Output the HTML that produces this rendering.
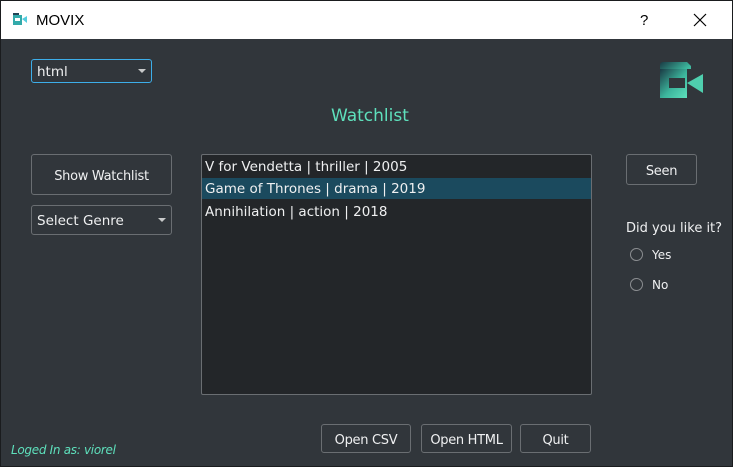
<!DOCTYPE html>
<html><head><meta charset="utf-8"><style>
*{margin:0;padding:0;box-sizing:border-box}
body{width:733px;height:467px;overflow:hidden;background:#31363b;font-family:"DejaVu Sans","Liberation Sans",sans-serif;color:#eff0f1;position:relative;font-size:13px}
.win{position:absolute;left:0;top:0;width:733px;height:467px;border:1px solid #1a1c1e}
.title{position:absolute;left:1px;top:1px;width:731px;height:38px;background:#fff;color:#000;font-family:"Liberation Sans",sans-serif;font-size:15px}
.a{position:absolute}
.btn{position:absolute;border:1px solid #6a6e72;border-radius:3px;display:flex;align-items:center;justify-content:center;font-size:13px;letter-spacing:-0.3px;padding-top:3px}
.combo{position:absolute;border:1px solid #6a6e72;border-radius:3px;font-size:13.5px;padding-left:5px;display:flex;align-items:center;padding-top:2px}
.arrow{position:absolute;right:5px;top:50%;margin-top:-2px;width:0;height:0;border-left:4px solid transparent;border-right:4px solid transparent;border-top:4px solid #c8c9ca}
.radio{position:absolute;width:13px;height:13px;border:1px solid #8a8d90;border-radius:50%}
.li{position:absolute;left:205px;font-size:13.5px}
</style></head><body>
<div class="win"></div>
<div class="title">
 <svg class="a" style="left:12px;top:12px" width="14" height="12" viewBox="0 0 14 12"><rect x="0" y="2" width="9" height="10" fill="#3aa"/><rect x="0" y="0" width="6" height="2" fill="#245"/><rect x="2" y="5" width="5" height="3" fill="#fff"/><polygon points="9,6 14,3 14,10" fill="#5cd"/></svg>
 <div class="a" style="left:35px;top:11px">MOVIX</div>
 <div class="a" style="left:639px;top:11px">?</div>
 <svg class="a" style="left:692px;top:12px" width="14" height="14"><path d="M1 1L13 13M13 1L1 13" stroke="#000" stroke-width="1.2"/></svg>
</div>
<div class="combo" style="left:31px;top:59px;width:121px;height:24px;border-color:#3daee9">html<span class="arrow"></span></div>
<svg class="a" style="left:660px;top:61px" width="44" height="38" viewBox="0 0 44 38">
 <defs><linearGradient id="g" x1="0" y1="0" x2="1" y2="1"><stop offset="0" stop-color="#1a3a44"/><stop offset="0.55" stop-color="#3cb59c"/><stop offset="1" stop-color="#5ee0bc"/></linearGradient></defs>
 <path d="M0 4Q0 1 3 1H27L31 5V8H27V25H0Z" fill="url(#g)"/>
 <path d="M0 8H27V37H0Z" fill="url(#g)"/>
 <rect x="9" y="17" width="16" height="10" fill="#31363b"/>
 <polygon points="27,22 43,13 43,32" fill="#4fcfae"/>
</svg>
<div class="a" style="left:331px;top:106px;font-size:17px;color:#5ee0bc">Watchlist</div>
<div class="btn" style="left:31px;top:154px;width:141px;height:41px">Show Watchlist</div>
<div class="combo" style="left:31px;top:205px;width:141px;height:30px">Select Genre<span class="arrow"></span></div>
<div class="a" style="left:201px;top:154px;width:391px;height:241px;background:#232629;border:1px solid #6a6e72;border-radius:2px"></div>
<div class="li" style="top:159px">V for Vendetta | thriller | 2005</div>
<div class="a" style="left:202px;top:178px;width:389px;height:21px;background:#1b4a5e"></div>
<div class="li" style="top:181px">Game of Thrones | drama | 2019</div>
<div class="li" style="top:204px">Annihilation | action | 2018</div>
<div class="btn" style="left:626px;top:154px;width:71px;height:31px">Seen</div>
<div class="a" style="left:626px;top:221px">Did you like it?</div>
<div class="radio" style="left:630px;top:248px"></div><div class="a" style="left:652px;top:248px;font-size:12px">Yes</div>
<div class="radio" style="left:630px;top:278px"></div><div class="a" style="left:652px;top:278px;font-size:12px">No</div>
<div class="a" style="left:11px;top:443px;font-size:12px;font-style:italic;color:#5ee0bc;letter-spacing:-0.3px">Loged In as: viorel</div>
<div class="btn" style="left:321px;top:424px;width:90px;height:29px">Open CSV</div>
<div class="btn" style="left:421px;top:424px;width:91px;height:29px">Open HTML</div>
<div class="btn" style="left:520px;top:424px;width:71px;height:29px">Quit</div>
</body></html>
